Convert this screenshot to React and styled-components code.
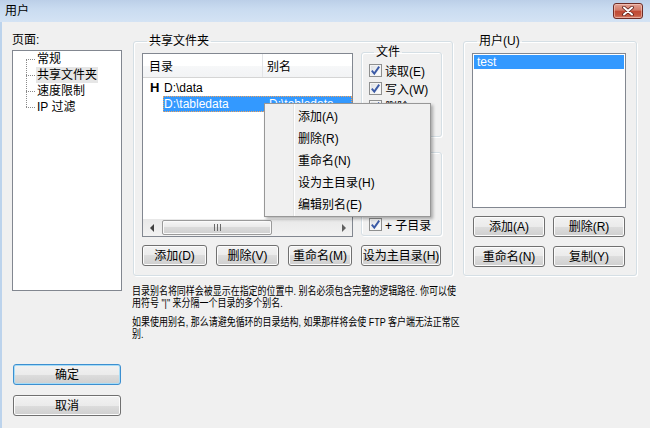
import React from 'react'
import styled, { createGlobalStyle } from 'styled-components'

const GlobalStyle = createGlobalStyle`
  html, body {
    margin: 0;
    padding: 0;
    background: #f0f0f0;
  }
  body {
    font-family: "Liberation Sans", "Noto Sans CJK SC", sans-serif;
    font-size: 12px;
    color: #000;
  }
  * {
    box-sizing: border-box;
  }
`

const Window = styled.div`
  position: relative;
  width: 650px;
  height: 428px;
  display: flex;
  flex-direction: column;
  overflow: hidden;
  background: #f0f0f0;
`

const TitleBar = styled.div`
  height: 22px;
  flex-shrink: 0;
  display: flex;
  align-items: center;
  justify-content: space-between;
  padding: 0 7px 0 5px;
  background: linear-gradient(#bccfe8, #c9dbf0 40%, #d4e3f4);
`

const TitleText = styled.span`
  line-height: 14px;
`

const CloseButton = styled.div`
  width: 30px;
  height: 16px;
  margin-top: -1px;
  border: 1px solid #6e2c26;
  border-radius: 3px;
  display: flex;
  align-items: center;
  justify-content: center;
  background: linear-gradient(#e2a294, #d27a68 45%, #c04a35 50%, #c4553e 80%, #d68470);
  box-shadow: inset 0 0 0 1px rgba(255, 220, 210, 0.5);
`

const Body = styled.div`
  flex: 1;
  min-height: 0;
  display: flex;
  gap: 11px;
  padding: 12px 13px 12px 10px;
  border-left: 2px solid #bcd3ec;
`

const LeftColumn = styled.div`
  width: 110px;
  flex-shrink: 0;
  display: flex;
  flex-direction: column;
`

const PageLabel = styled.div`
  line-height: 14px;
  margin: -1px 0 3px;
`

const TreeBox = styled.div`
  height: 241px;
  border: 1px solid #828790;
  background: #fff;
`

const TreeList = styled.div`
  position: relative;
  margin-left: 13px;
  &::before {
    content: '';
    position: absolute;
    left: 0;
    top: 8px;
    bottom: 8px;
    border-left: 1px dotted #8a8a8a;
  }
`

const TreeItem = styled.div`
  position: relative;
  height: 16px;
  display: flex;
  align-items: center;
  padding-left: 10px;
  &::before {
    content: '';
    position: absolute;
    left: 0;
    top: 8px;
    width: 9px;
    border-top: 1px dotted #8a8a8a;
  }
`

const TreeLabel = styled.span`
  padding: 0 1px;
  line-height: 16px;
  background: ${p => (p.$selected ? '#e6e6e6' : 'transparent')};
`

const DialogButtons = styled.div`
  margin-top: auto;
  padding: 0 1px;
  display: flex;
  flex-direction: column;
  gap: 10px;
`

const Button = styled.div`
  width: ${p => (p.$w ? `${p.$w}px` : 'auto')};
  height: 21px;
  display: flex;
  align-items: center;
  justify-content: center;
  border: 1px solid ${p => (p.$default ? '#3c8fd0' : '#707070')};
  border-radius: 3px;
  background: linear-gradient(#f2f2f2, #ebebeb 50%, #dddddd 50%, #cfcfcf);
  box-shadow: inset 0 0 0 1px ${p => (p.$default ? '#a6dcf7' : '#fcfcfc')};
  line-height: 14px;
  white-space: nowrap;
`

const MainColumn = styled.div`
  flex: 1;
  min-width: 0;
  display: flex;
  flex-direction: column;
`

const TopRow = styled.div`
  display: flex;
  gap: 10px;
`

const Group = styled.fieldset`
  margin: 0;
  min-width: 0;
  width: ${p => (p.$w ? `${p.$w}px` : 'auto')};
  flex: ${p => (p.$w ? 'none' : '1')};
  padding: ${p => p.$pad};
  border: 1px solid #d5dfe5;
  border-radius: 3px;
  box-shadow: inset 1px 1px 0 #fff, 1px 1px 0 #fff;
`

const Legend = styled.legend`
  padding: 0 2px;
  margin-left: 5px;
  line-height: 14px;
  font-size: 12px;
`

const FolderRow = styled.div`
  display: flex;
  gap: 8px;
  align-items: flex-start;
`

const ListView = styled.div`
  width: 211px;
  height: 184px;
  margin-top: 5px;
  border: 1px solid #828790;
  background: #fff;
  display: flex;
  flex-direction: column;
`

const ListHeader = styled.div`
  height: 24px;
  flex-shrink: 0;
  display: flex;
  border-bottom: 1px solid #d5d5d5;
  background: linear-gradient(#ffffff, #ffffff 50%, #f7f8f9 50%, #f2f3f5);
`

const HeaderCell = styled.div`
  width: ${p => (p.$w ? `${p.$w}px` : 'auto')};
  flex: ${p => (p.$w ? 'none' : '1')};
  display: flex;
  align-items: center;
  padding-left: ${p => p.$pl}px;
  border-right: ${p => (p.$w ? '1px solid #e3e5e8' : 'none')};
`

const ListRows = styled.div`
  flex: 1;
  padding-top: 2px;
`

const ListRow = styled.div`
  height: 16px;
  display: flex;
`

const Marker = styled.div`
  width: 20px;
  padding-left: 7px;
  font-weight: bold;
  font-size: 13px;
  line-height: 16px;
`

const RowBody = styled.div`
  flex: 1;
  display: flex;
  align-items: center;
  line-height: 16px;
  background: ${p => (p.$selected ? '#3399ff' : 'transparent')};
  color: ${p => (p.$selected ? '#fff' : '#000')};
  outline: ${p => (p.$selected ? '1px dotted #f2a35a' : 'none')};
  outline-offset: -1px;
`

const NameCell = styled.span`
  width: 100px;
  padding-left: 1px;
`

const AliasCell = styled.span`
  padding-left: 6px;
  white-space: nowrap;
`

const HScroll = styled.div`
  height: 17px;
  flex-shrink: 0;
  display: flex;
  align-items: center;
  background: linear-gradient(#e8e8e8, #f2f2f2);
`

const ArrowButton = styled.div`
  width: 17px;
  height: 17px;
  display: flex;
  align-items: center;
  justify-content: center;
  &::before {
    content: '';
    border-top: 4px solid transparent;
    border-bottom: 4px solid transparent;
    ${p => (p.$dir === 'left'
      ? 'border-right: 4px solid #404040;'
      : 'border-left: 4px solid #606060;')}
  }
`

const Thumb = styled.div`
  width: 110px;
  height: 15px;
  margin-left: 2px;
  margin-right: auto;
  border: 1px solid #9a9a9a;
  border-radius: 2px;
  background: linear-gradient(#f6f6f6, #e9e9e9 50%, #dadada 50%, #d0d0d0);
  box-shadow: inset 0 0 0 1px #fafafa;
  display: flex;
  align-items: center;
  justify-content: center;
`

const Grip = styled.span`
  width: 7px;
  height: 7px;
  background: repeating-linear-gradient(to right, #6a6a6a 0 1px, transparent 1px 3px);
`

const RightPanel = styled.div`
  width: 81px;
  margin-top: -3px;
  display: flex;
  flex-direction: column;
  gap: 8px;
`

const CheckRow = styled.div`
  height: 18px;
  display: flex;
  align-items: center;
  gap: 3px;
  white-space: nowrap;
`

const CheckBox = styled.span`
  width: 13px;
  height: 13px;
  flex-shrink: 0;
  border: 1px solid #8e8f8f;
  background: linear-gradient(135deg, #d9dce0, #f7f8f9 70%, #ffffff);
  box-shadow: inset 0 0 0 1px #f4f4f4;
  display: flex;
  align-items: center;
  justify-content: center;
`

const ButtonRow = styled.div`
  display: flex;
  gap: 9px;
  margin-top: 8px;
`

const UserList = styled.div`
  height: 155px;
  margin-top: 5px;
  border: 1px solid #828790;
  background: #fff;
  padding: 1px;
`

const UserRow = styled.div`
  height: 14px;
  line-height: 14px;
  padding-left: 3px;
  background: ${p => (p.$selected ? '#3399ff' : 'transparent')};
  color: ${p => (p.$selected ? '#fff' : '#000')};
`

const UserButtons = styled.div`
  display: grid;
  grid-template-columns: 72px 72px;
  column-gap: 8px;
  row-gap: 9px;
  margin-top: 8px;
  padding-left: 1px;
`

const Description = styled.div`
  margin: 9px 0 0 -1px;
  font-size: 11.5px;
  line-height: 12px;
  transform: scaleX(0.78);
  transform-origin: left top;
  white-space: pre;
`

const Paragraph = styled.p`
  margin: ${p => (p.$first ? '0' : '7px 0 0')};
`

const ContextMenu = styled.div`
  position: absolute;
  left: 264px;
  top: 103px;
  width: 167px;
  height: 114px;
  padding-top: 2px;
  border: 1px solid #979797;
  background:
    linear-gradient(to right, transparent 28px, #e2e3e3 28px, #e2e3e3 29px, #ffffff 29px, #ffffff 30px, transparent 30px),
    #f0f0f0;
  box-shadow: 2px 2px 3px rgba(0, 0, 0, 0.3);
  z-index: 10;
`

const MenuItem = styled.div`
  height: 22px;
  line-height: 22px;
  padding-left: 33px;
`

const Check = () => (
  <CheckBox>
    <svg width="11" height="11" viewBox="0 0 11 11">
      <path d="M1.8 5.6 L4.3 8.6 L9.2 1.6" fill="none" stroke="#3b5aa6" strokeWidth="1.9" />
    </svg>
  </CheckBox>
)

const filePerms = ['读取(E)', '写入(W)', '删除(D)', '追加(A)']
const dirPerms = ['创建(C)', '删除(L)', '列表(I)', '+ 子目录']
const menuItems = ['添加(A)', '删除(R)', '重命名(N)', '设为主目录(H)', '编辑别名(E)']

export default function App() {
  return (
    <Window>
      <GlobalStyle />
      <TitleBar>
        <TitleText>用户</TitleText>
        <CloseButton>
          <svg width="14" height="10" viewBox="0 0 14 10">
            <path d="M3 1.5 L11 8.5 M11 1.5 L3 8.5" stroke="#5a1e18" strokeWidth="3.6" strokeLinecap="round" />
            <path d="M3 1.5 L11 8.5 M11 1.5 L3 8.5" stroke="#ffffff" strokeWidth="2" strokeLinecap="round" />
          </svg>
        </CloseButton>
      </TitleBar>
      <Body>
        <LeftColumn>
          <PageLabel>页面:</PageLabel>
          <TreeBox>
            <TreeList>
              <TreeItem><TreeLabel>常规</TreeLabel></TreeItem>
              <TreeItem><TreeLabel $selected>共享文件夹</TreeLabel></TreeItem>
              <TreeItem><TreeLabel>速度限制</TreeLabel></TreeItem>
              <TreeItem><TreeLabel>IP 过滤</TreeLabel></TreeItem>
            </TreeList>
          </TreeBox>
          <DialogButtons>
            <Button $default>确定</Button>
            <Button>取消</Button>
          </DialogButtons>
        </LeftColumn>
        <MainColumn>
          <TopRow>
            <Group $w={320} $pad="0 10px 8px 8px">
              <Legend>共享文件夹</Legend>
              <FolderRow>
                <ListView>
                  <ListHeader>
                    <HeaderCell $w={120} $pl={6}>目录</HeaderCell>
                    <HeaderCell $pl={4}>别名</HeaderCell>
                  </ListHeader>
                  <ListRows>
                    <ListRow>
                      <Marker>H</Marker>
                      <RowBody><NameCell>D:\data</NameCell></RowBody>
                    </ListRow>
                    <ListRow>
                      <Marker />
                      <RowBody $selected>
                        <NameCell>D:\tabledata</NameCell>
                        <AliasCell>D:\tabledata</AliasCell>
                      </RowBody>
                    </ListRow>
                  </ListRows>
                  <HScroll>
                    <ArrowButton $dir="left" />
                    <Thumb><Grip /></Thumb>
                    <ArrowButton $dir="right" />
                  </HScroll>
                </ListView>
                <RightPanel>
                  <Group $pad="2px 2px 3px 7px">
                    <Legend>文件</Legend>
                    {filePerms.map(p => (
                      <CheckRow key={p}><Check />{p}</CheckRow>
                    ))}
                  </Group>
                  <Group $pad="2px 2px 2px 7px">
                    <Legend>目录</Legend>
                    {dirPerms.map(p => (
                      <CheckRow key={p}><Check />{p}</CheckRow>
                    ))}
                  </Group>
                </RightPanel>
              </FolderRow>
              <ButtonRow>
                <Button $w={65}>添加(D)</Button>
                <Button $w={63}>删除(V)</Button>
                <Button $w={64}>重命名(M)</Button>
                <Button $w={80}>设为主目录(H)</Button>
              </ButtonRow>
            </Group>
            <Group $pad="0 10px 8px 8px">
              <Legend>用户(U)</Legend>
              <UserList>
                <UserRow $selected>test</UserRow>
              </UserList>
              <UserButtons>
                <Button>添加(A)</Button>
                <Button>删除(R)</Button>
                <Button>重命名(N)</Button>
                <Button>复制(Y)</Button>
              </UserButtons>
            </Group>
          </TopRow>
          <Description>
            <Paragraph $first>
              {'目录别名将同样会被显示在指定的位置中. 别名必须包含完整的逻辑路径. 你可以使\n用符号 "|" 来分隔一个目录的多个别名.'}
            </Paragraph>
            <Paragraph>
              {'如果使用别名, 那么请避免循环的目录结构, 如果那样将会使 FTP 客户端无法正常区\n别.'}
            </Paragraph>
          </Description>
        </MainColumn>
      </Body>
      <ContextMenu>
        {menuItems.map(m => (
          <MenuItem key={m}>{m}</MenuItem>
        ))}
      </ContextMenu>
    </Window>
  )
}
